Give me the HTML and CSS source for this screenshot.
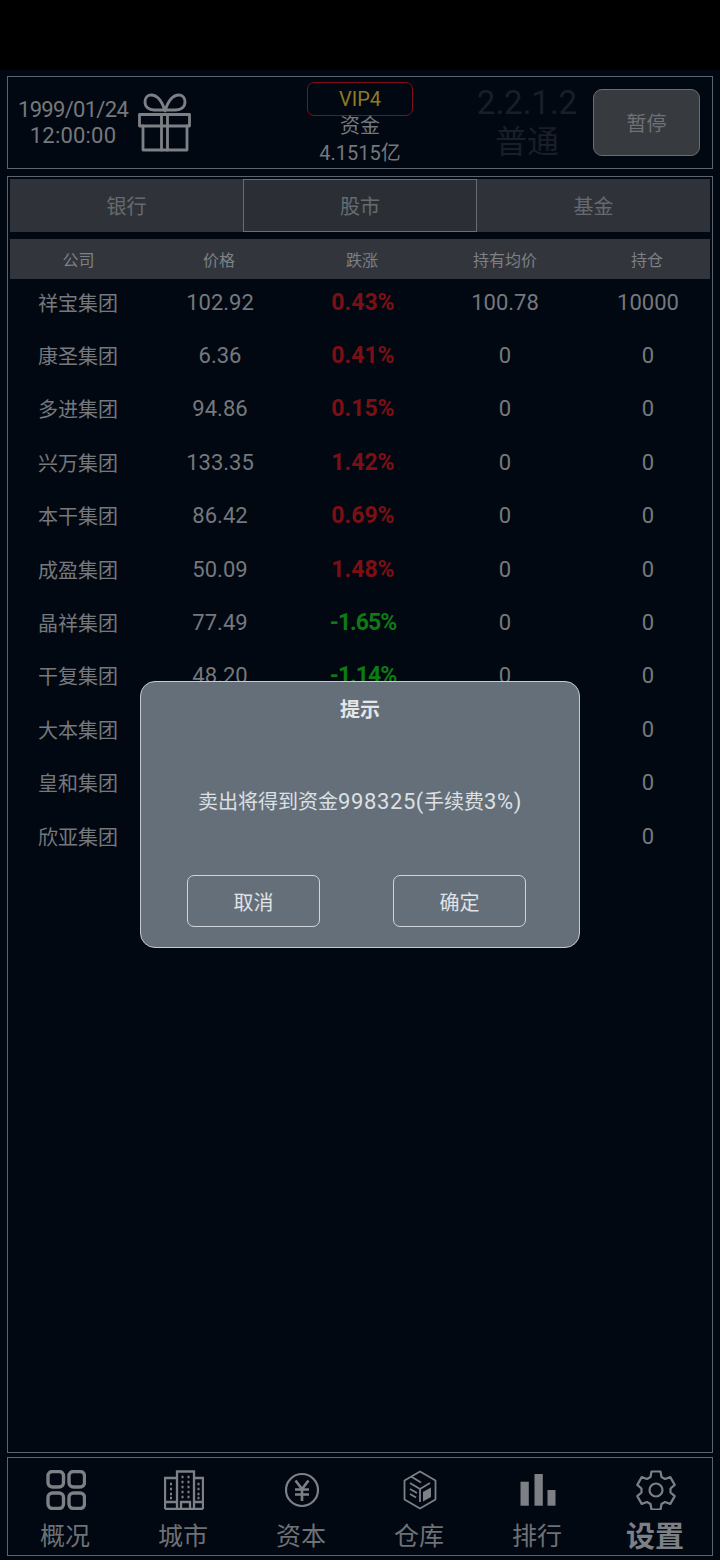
FILE: index.html
```html
<!DOCTYPE html>
<html lang="zh-CN">
<head>
<meta charset="utf-8">
<title>股市</title>
<link rel="stylesheet" href="styles.css">
</head>
<body>
<div class="screen">
  <div class="statusbar"></div>
  <div class="app">
    <header class="top box">
      <div class="clock"><div>1999/01/24</div><div class="clock-time">12:00:00</div></div>
      <svg class="gift" viewBox="0 0 53 59" fill="none" stroke="#7d8084" stroke-width="2.800" stroke-linejoin="round" stroke-linecap="round">
        <path d="M27 18C24 8 19 2 13 2 9 2 7 5 7 9c0 5 4 8 9 8h22c5 0 9-3 9-8 0-4-2-7-6-7-6 0-11 6-14 16Z"/>
        <path d="M1.500 21.500h50V33h-50Z"/>
        <path d="M5 33v24h44V33"/>
        <path d="M23.500 21.500V57M29.500 21.500V57"/>
      </svg>
      <div class="funds">
        <div class="vip">VIP4</div>
        <div class="funds-label">资金</div>
        <div class="funds-value">4.1515亿</div>
      </div>
      <div class="version"><div class="ver-num">2.2.1.2</div><div class="ver-mode">普通</div></div>
      <button class="pause">暂停</button>
    </header>

    <main class="main box">
      <nav class="tabs">
        <div class="tab">银行</div>
        <div class="tab tab-on">股市</div>
        <div class="tab">基金</div>
      </nav>
      <div class="row head"><span>公司</span><span>价格</span><span>跌涨</span><span>持有均价</span><span>持仓</span></div>
      <div class="row"><span>祥宝集团</span><span class="num">102.92</span><span class="up">0.43%</span><span class="num">100.78</span><span class="num">10000</span></div>
      <div class="row"><span>康圣集团</span><span class="num">6.36</span><span class="up">0.41%</span><span class="num">0</span><span class="num">0</span></div>
      <div class="row"><span>多进集团</span><span class="num">94.86</span><span class="up">0.15%</span><span class="num">0</span><span class="num">0</span></div>
      <div class="row"><span>兴万集团</span><span class="num">133.35</span><span class="up">1.42%</span><span class="num">0</span><span class="num">0</span></div>
      <div class="row"><span>本干集团</span><span class="num">86.42</span><span class="up">0.69%</span><span class="num">0</span><span class="num">0</span></div>
      <div class="row"><span>成盈集团</span><span class="num">50.09</span><span class="up">1.48%</span><span class="num">0</span><span class="num">0</span></div>
      <div class="row"><span>晶祥集团</span><span class="num">77.49</span><span class="down">-1.65%</span><span class="num">0</span><span class="num">0</span></div>
      <div class="row"><span>干复集团</span><span class="num">48.20</span><span class="down">-1.14%</span><span class="num">0</span><span class="num">0</span></div>
      <div class="row"><span>大本集团</span><span class="num"></span><span></span><span class="num"></span><span class="num">0</span></div>
      <div class="row"><span>皇和集团</span><span class="num"></span><span></span><span class="num"></span><span class="num">0</span></div>
      <div class="row"><span>欣亚集团</span><span class="num"></span><span></span><span class="num"></span><span class="num">0</span></div>
    </main>

    <footer class="bottom box">
      <div class="nav-item">
        <svg class="nav-icon" viewBox="0 0 40 40" fill="none" stroke="#7d8084" stroke-width="3.400"><rect x="2" y="1.500" width="15.500" height="15.500" rx="4.500"/><rect x="23" y="1.500" width="15.500" height="15.500" rx="4.500"/><rect x="2" y="23" width="15.500" height="15.500" rx="4.500"/><rect x="23" y="23" width="15.500" height="15.500" rx="4.500"/></svg>
        <span>概况</span>
      </div>
      <div class="nav-item">
        <svg class="nav-icon" viewBox="0 0 40 40" fill="none" stroke="#7d8084" stroke-width="2.300"><path d="M1 39V8h12M39 39V8H30M13 39V1.500h17V39M1 39h38M1 32h12M30 32h9M17 39v-7h9v7"/><path d="M17.500 7h2M23.500 7h2M17.500 12h2M23.500 12h2M17.500 17h2M23.500 17h2M17.500 22h2M23.500 22h2M17.500 27h2M23.500 27h2M6 14h2M6 19h2M6 24h2M6 28h2M33.500 14h2M33.500 19h2M33.500 24h2M33.500 28h2"/></svg>
        <span>城市</span>
      </div>
      <div class="nav-item">
        <svg class="nav-icon" viewBox="0 0 40 40" fill="none" stroke="#7d8084" stroke-width="2.200"><circle cx="20" cy="20" r="16"/><path d="M13.500 10.500 20 19l6.500-8.500M13 19.500h14M13 24.500h14M20 19v12" stroke-width="2.600"/></svg>
        <span>资本</span>
      </div>
      <div class="nav-item">
        <svg class="nav-icon" viewBox="0 0 40 40" fill="none" stroke="#7d8084" stroke-width="1.800" stroke-linejoin="round"><path d="M20 1.500 35.500 10.500v19L20 38.500 4.500 29.500v-19Z"/><path d="M10 13l10 6 10-6M20 19v13M11 6.500l10 6M10 19l7 4M10 24l6 3.500"/><path d="M23 22l8-4.500v9.500l-8 4.500Z" fill="#7d8084" stroke="none"/></svg>
        <span>仓库</span>
      </div>
      <div class="nav-item">
        <svg class="nav-icon" viewBox="0 0 40 40" fill="#7d8084"><rect x="2.500" y="11.700" width="8.300" height="24"/><rect x="16.500" y="4" width="8.300" height="31.700"/><rect x="29.500" y="20" width="8" height="15.700"/></svg>
        <span>排行</span>
      </div>
      <div class="nav-item nav-on">
        <svg class="nav-icon" viewBox="0 0 40 40" fill="none" stroke="#7d8084" stroke-width="2.200" stroke-linejoin="round"><path d="M15.500 1.500h9l1 5.500 3.500 2 5.300-1.900 4.400 7.800-4.200 3.600v4l4.200 3.600-4.400 7.800-5.300-1.900-3.500 2-1 5.500h-9l-1-5.500-3.500-2-5.300 1.900-4.400-7.800 4.200-3.600v-4L1.300 14.900l4.400-7.800L11 9l3.500-2Z"/><circle cx="20" cy="20" r="6.500"/></svg>
        <span>设置</span>
      </div>
    </footer>
  </div>

  <div class="dialog">
    <div class="dialog-title">提示</div>
    <div class="dialog-msg">卖出将得到资金<span class="latin">998325(</span>手续费<span class="latin">3%)</span></div>
    <div class="dialog-actions">
      <button class="dialog-btn">取消</button>
      <button class="dialog-btn">确定</button>
    </div>
  </div>
</div>
</body>
</html>
```
FILE: styles.css
```css
* { box-sizing: border-box; }
html, body { margin: 0; padding: 0; background: #020812; }
body { font-family: Roboto, "Noto Sans CJK SC", sans-serif; color: #7d8084; }
.screen { position: relative; width: 720px; height: 1560px; overflow: hidden; }
.statusbar { height: 70px; background: #000; }
.app { padding: 6px 7px 4px; display: flex; flex-direction: column; height: 1490px; }
.box { border: 1px solid #5c656f; }

.top { height: 93px; flex: none; margin-bottom: 7px; display: flex; align-items: center; position: relative; }
.clock { width: 110px; margin-left: 10px; text-align: center; font-size: 22px; line-height: 26px; letter-spacing: -.7px; white-space: nowrap; color: #75787c; }
.clock-time { letter-spacing: .2px; }
.gift { width: 53px; height: 59px; margin-left: 10px; flex: none; }
.funds { position: absolute; left: 299px; top: 5px; width: 106px; text-align: center; color: #75787c; font-size: 20px; line-height: 28px; }
.vip { height: 34px; border: 1px solid #7d0f18; border-radius: 7px; color: #8f7a22; font-size: 20px; line-height: 32px; margin-bottom: -4px; }
.funds-value { line-height: 27px; }
.version { position: absolute; left: 460px; top: 8px; width: 118px; text-align: center; color: #191e27; }
.ver-num { font-size: 33px; line-height: 36px; }
.ver-mode { font-size: 32px; line-height: 43px; }
.pause { position: absolute; left: 585px; top: 12px; width: 107px; height: 67px; border: 1px solid #6a6d72; border-radius: 9px; background: #373a3f; color: #6f7276; font: 20px Roboto, "Noto Sans CJK SC", sans-serif; padding: 0; }

.main { flex: 1; padding: 2px; }
.tabs { display: flex; height: 53px; background: #2f3339; }
.tab { flex: 1; display: flex; align-items: center; justify-content: center; font-size: 20px; color: #676a6f; }
.tab-on { flex: none; width: 234px; border: 1px solid #6a6d72; background: #2b2f35; }
.row { display: grid; grid-template-columns: 136px 148px 138px 146px 132px; height: 53.400px; padding-bottom: 7px; align-items: center; text-align: center; font-size: 20px; color: #75787c; }
.row > span { display: block; }
.row > span:last-child { padding-left: 8px; }
.head { grid-template-columns: 136px 146px 140px 146px 132px; height: 40px; padding-bottom: 0; margin-top: 7px; background: #32363c; font-size: 16px; color: #7d8084; }
.head > span:first-child { padding-left: 1px; }
.head > span:last-child { padding-left: 6px; }
.num { font-size: 22px; }
.up { color: #7d0f14; font-weight: 700; font-size: 23px; }
.down { color: #0d7a12; font-weight: 700; font-size: 23px; letter-spacing: -1px; }

.bottom { height: 99px; flex: none; margin-top: 4px; display: grid; grid-template-columns: repeat(6, 118px); justify-content: center; }
.nav-item { display: flex; flex-direction: column; align-items: center; font-size: 25px; color: #6e7175; padding-top: 12px; }
.nav-icon { width: 40px; height: 40px; display: block; margin-bottom: 9px; margin-left: 2px; }
.nav-item span { line-height: 36px; }
.nav-on span { font-weight: 700; font-size: 29px; color: #7d8084; }

.dialog { position: absolute; left: 140px; top: 681px; width: 440px; height: 267px; background: #656f7a; border: 1px solid #c5cbd1; border-radius: 15px; color: #dde0e3; }
.dialog-title { text-align: center; font-size: 20px; font-weight: 700; line-height: 28px; margin-top: 14px; color: #e4e6e8; }
.dialog-msg { text-align: center; font-size: 20px; line-height: 28px; height: 28px; margin-top: 64px; color: #dde0e3; }
.latin { font-size: 22px; letter-spacing: .6px; line-height: 20px; }
.dialog-actions { display: flex; justify-content: space-between; padding: 0 53px 0 46px; margin-top: 59px; }
.dialog-btn { width: 133px; height: 52px; background: transparent; border: 1px solid #d0d5da; border-radius: 7px; color: #e0e2e5; font: 20px Roboto, "Noto Sans CJK SC", sans-serif; padding: 0; }
```
